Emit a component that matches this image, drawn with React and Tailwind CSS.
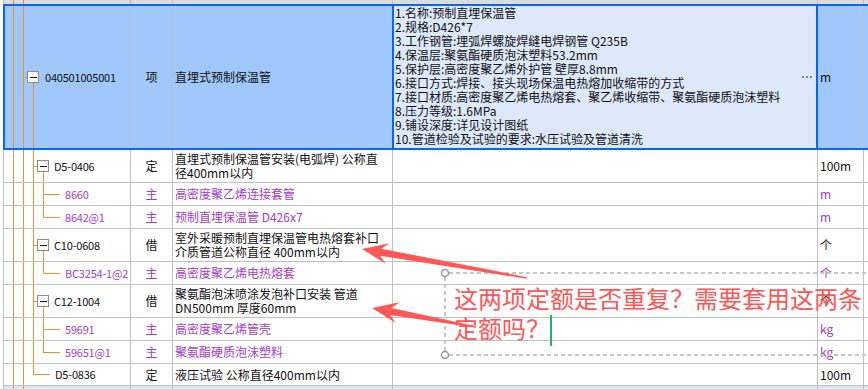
import React from "react";

const ORANGE = "#f0922e";

// tree connector drawing for the code column, x in page coords
function Tree({ x0, x1, h, lines = [], hook, box }) {
  const w = x1 - x0;
  return (
    <svg width={w} height={h} viewBox={`${x0} 0 ${w} ${h}`} className="block shrink-0">
      {lines.map(([x, y1, y2], i) => (
        <line key={i} x1={x + 0.5} x2={x + 0.5} y1={y1} y2={y2} stroke={ORANGE} strokeWidth="1" />
      ))}
      {hook && (
        <line x1={hook[0]} x2={hook[1]} y1={hook[2] + 0.5} y2={hook[2] + 0.5} stroke={ORANGE} strokeWidth="1" />
      )}
      {box && (
        <g>
          <rect x={box[0] - 5.5} y={box[1] - 5.5} width="11" height="11" fill="#fff" stroke="#8c8c8c" />
          <line x1={box[0] - 3} x2={box[0] + 4} y1={box[1] + 0.5} y2={box[1] + 0.5} stroke="#111" />
        </g>
      )}
    </svg>
  );
}

function treeFor(kind, h) {
  const cy = Math.floor(h / 2);
  const base = [
    [13, 0, h],
    [23, 0, h],
  ];
  if (kind === "parent")
    return { x1: 54, lines: [...base, [33, 0, h], [43, cy + 6, h]], hook: [33, 37, cy], box: [43, cy] };
  if (kind === "child") return { x1: 65, lines: [...base, [33, 0, h], [43, 0, h]], hook: [43, 60, cy] };
  if (kind === "lastChild") return { x1: 65, lines: [...base, [33, 0, h], [43, 0, cy + 1]], hook: [43, 60, cy] };
  return { x1: 55, lines: [...base, [33, 0, cy + 1]], hook: [33, 50, cy] };
}

function Row({ size, kind, code, type, name, unit, purple, unitPurple }) {
  const h = size === "tall" ? 32 : size === "last" ? 21 : 22;
  const rowH = size === "tall" ? "h-[33px]" : size === "last" ? "h-[22px]" : "h-[23px]";
  const color = purple ? "text-[#a53dc6]" : "text-[#111]";
  const t = treeFor(kind, h);
  const lines = Array.isArray(name) ? name : [name];
  return (
    <div className={`flex border-b border-l border-[#c0c0c0] ${rowH}`}>
      <div className="flex w-[127px] shrink-0 items-center border-r border-[#c0c0c0]">
        <Tree x0={4} x1={t.x1} h={h} lines={t.lines} hook={t.hook} box={t.box} />
        <span className={`whitespace-nowrap text-[11px] tracking-[-0.2px] ${color}`}>{code}</span>
      </div>
      <div className={`flex w-[42px] shrink-0 items-center justify-center border-r border-[#c0c0c0] ${color}`}>
        {type}
      </div>
      <div className={`flex w-[220px] shrink-0 flex-col justify-center border-r border-[#c0c0c0] pl-[2px] leading-[14px] ${color}`}>
        {lines.map((l) => (
          <div key={l} className="whitespace-nowrap">
            {l}
          </div>
        ))}
      </div>
      <div className="w-[425px] shrink-0 border-r border-[#c0c0c0]" />
      <div
        className={`flex w-[46px] shrink-0 items-center border-r border-[#c0c0c0] pl-[2px] ${
          unitPurple ? "text-[#a53dc6]" : "text-[#111]"
        }`}
      >
        {unit}
      </div>
      <div className="flex-1" />
    </div>
  );
}

const desc = [
  "1.名称:预制直埋保温管",
  "2.规格:D426*7",
  "3.工作钢管:埋弧焊螺旋焊缝电焊钢管 Q235B",
  "4.保温层:聚氨酯硬质泡沫塑料53.2mm",
  "5.保护层:高密度聚乙烯外护管 壁厚8.8mm",
  "6.接口方式:焊接、接头现场保温电热熔加收缩带的方式",
  "7.接口材质:高密度聚乙烯电热熔套、聚乙烯收缩带、聚氨酯硬质泡沫塑料",
  "8.压力等级:1.6MPa",
  "9.铺设深度:详见设计图纸",
  "10.管道检验及试验的要求:水压试验及管道清洗",
];

const rows = [
  { size: "tall", kind: "parent", code: "D5-0406", type: "定", name: ["直埋式预制保温管安装(电弧焊) 公称直", "径400mm以内"], unit: "100m" },
  { kind: "child", code: "8660", type: "主", name: "高密度聚乙烯连接套管", unit: "m", purple: true, unitPurple: true },
  { kind: "lastChild", code: "8642@1", type: "主", name: "预制直埋保温管 D426x7", unit: "m", purple: true, unitPurple: true },
  { size: "tall", kind: "parent", code: "C10-0608", type: "借", name: ["室外采暖预制直埋保温管电热熔套补口", "介质管道公称直径 400mm以内"], unit: "个" },
  { kind: "lastChild", code: "BC3254-1@2", type: "主", name: "高密度聚乙烯电热熔套", unit: "个", purple: true, unitPurple: true },
  { size: "tall", kind: "parent", code: "C12-1004", type: "借", name: ["聚氨酯泡沫喷涂发泡补口安装 管道", "DN500mm 厚度60mm"], unit: "个" },
  { kind: "child", code: "59691", type: "主", name: "高密度聚乙烯管壳", unit: "kg", purple: true, unitPurple: true },
  { kind: "lastChild", code: "59651@1", type: "主", name: "聚氨酯硬质泡沫塑料", unit: "kg", purple: true, unitPurple: true },
  { size: "last", kind: "end", code: "D5-0836", type: "定", name: "液压试验 公称直径400mm以内", unit: "100m" },
];

function arrow(tx, ty, ex, ey) {
  const dx = tx - ex;
  const dy = ty - ey;
  const L = Math.hypot(dx, dy);
  const ux = dx / L;
  const uy = dy / L;
  const nx = -uy;
  const ny = ux;
  const head = 26;
  const join = 19;
  const hw = 10.5;
  const sw = 3.6;
  const tw = 0.8;
  const bx = tx - ux * head;
  const by = ty - uy * head;
  const jx = tx - ux * join;
  const jy = ty - uy * join;
  const p = [
    [tx, ty],
    [bx + nx * hw, by + ny * hw],
    [jx + nx * sw, jy + ny * sw],
    [ex + nx * tw, ey + ny * tw],
    [ex - nx * tw, ey - ny * tw],
    [jx - nx * sw, jy - ny * sw],
    [bx - nx * hw, by - ny * hw],
  ];
  return p.map(([x, y]) => `${x.toFixed(1)},${y.toFixed(1)}`).join(" ");
}

export default function App() {
  return (
    <div className="relative h-[389px] w-[868px] overflow-hidden bg-white pl-[3px] font-['Noto_Sans_CJK_SC',sans-serif] text-[12px] text-[#111]">
      {/* bottom edge of previous row */}
      <div className="flex h-[4px] border-l border-[#c0c0c0] bg-[#dcdcdc]">
        <div className="w-[127px] shrink-0 border-r border-[#b4b4b4]">
          <Tree x0={4} x1={30} h={4} lines={[[13, 0, 4], [23, 0, 4]]} />
        </div>
        <div className="w-[42px] shrink-0 border-r border-[#c4c4c4]" />
        <div className="w-[220px] shrink-0 border-r border-[#c4c4c4]" />
        <div className="w-[425px] shrink-0 border-r border-[#c4c4c4]" />
        <div className="w-[46px] shrink-0 border-r border-[#c4c4c4]" />
      </div>

      {/* selected list item */}
      <div className="flex h-[146px] border-y-2 border-l-2 border-[#0a64f5] bg-[#a0c8fa]">
        <div className="flex w-[126px] shrink-0 items-center border-r border-[#b7c0cf]">
          <Tree x0={5} x1={45} h={142} lines={[[13, 0, 142], [23, 0, 142], [33, 77, 142]]} hook={[23, 27, 71]} box={[33, 71]} />
          <span className="whitespace-nowrap text-[11px] tracking-[-0.2px]">040501005001</span>
        </div>
        <div className="flex w-[42px] shrink-0 items-center justify-center border-r border-[#b7c0cf]">项</div>
        <div className="flex w-[219px] shrink-0 items-center pl-[2px]">直埋式预制保温管</div>
        <div className="flex w-[426px] shrink-0 border-x-2 border-[#0a64f5] bg-[#dde9fb]">
          <div className="flex-1 pl-[1px] leading-[14px]">
            {desc.map((d) => (
              <div key={d} className="whitespace-nowrap">
                {d}
              </div>
            ))}
          </div>
          <div className="mr-[4px] flex gap-[2px] self-center">
            <span className="h-[2px] w-[2px] bg-[#4f8fd6]" />
            <span className="h-[2px] w-[2px] bg-[#4f8fd6]" />
            <span className="h-[2px] w-[2px] bg-[#4f8fd6]" />
          </div>
        </div>
        <div className="flex w-[46px] shrink-0 items-center border-r border-[#b7c0cf] pl-[2px]">m</div>
        <div className="flex-1" />
      </div>

      {rows.map((r) => (
        <Row key={r.code} {...r} />
      ))}

      {/* top of next row */}
      <div className="flex h-[3px] border-l border-[#c0c0c0] bg-[#dce6f5]">
        <div className="w-[127px] shrink-0 border-r border-[#c0c0c0]">
          <Tree x0={4} x1={30} h={3} lines={[[13, 0, 3], [23, 0, 3]]} />
        </div>
        <div className="w-[42px] shrink-0 border-r border-[#c0c0c0]" />
        <div className="w-[220px] shrink-0 border-r border-[#c0c0c0]" />
        <div className="w-[425px] shrink-0 border-r border-[#c0c0c0]" />
        <div className="w-[46px] shrink-0 border-r border-[#c0c0c0]" />
      </div>

      {/* annotation layer */}
      <svg className="pointer-events-none absolute inset-0" width="868" height="389">
        <g stroke="#c6c6c6" strokeWidth="2" strokeDasharray="4 3" fill="none">
          <line x1="449" y1="273" x2="868" y2="273" />
          <line x1="449" y1="355" x2="868" y2="355" />
          <line x1="445" y1="277" x2="445" y2="351" />
        </g>
        <circle cx="445" cy="273" r="3.5" fill="#fff" stroke="#9a9a9a" strokeWidth="1.5" />
        <circle cx="445" cy="355" r="3.5" fill="#fff" stroke="#9a9a9a" strokeWidth="1.5" />
        <polygon points={arrow(362, 249, 527, 278)} fill="#ff5757" />
        <polygon points={arrow(372, 308, 476, 327)} fill="#ff5757" />
        <rect x="550" y="315" width="2" height="31" fill="#1cb36a" />
      </svg>
      <div className="pointer-events-none absolute left-[454px] top-[283px] text-[24px] leading-[30px] text-[#ff5555]">
        <div className="whitespace-nowrap">这两项定额是否重复？需要套用这两条</div>
        <div className="whitespace-nowrap">定额吗？</div>
      </div>
    </div>
  );
}
